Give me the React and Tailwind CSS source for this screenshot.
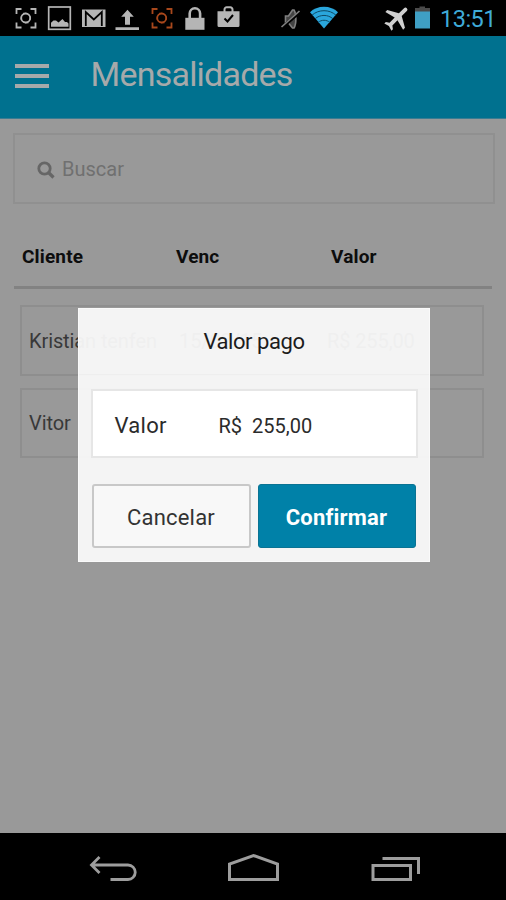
import { useState } from 'react';

const clients = [
  { name: 'Kristian tenfen', due: '15/02/15', value: 'R$ 255,00' },
  { name: 'Vitor', due: '', value: '' },
];

const StatusIcon = ({ children, className = 'text-[#b5b5b5]' }) => (
  <svg viewBox="0 0 34 36" className={`h-9 w-[34px] shrink-0 ${className}`} fill="none" stroke="currentColor" strokeWidth="2">
    {children}
  </svg>
);

const CaptureIcon = ({ className }) => (
  <StatusIcon className={className}>
    <path d="M7.500 14V9h5M21.500 9h5v5M26.500 22.500v5h-5M12.500 27.500h-5v-5" strokeWidth="1.800" />
    <circle cx="16.700" cy="18" r="4.500" strokeWidth="1.800" />
    <path d="M12.500 16l-.5 3.500M21 20l.5-3.500M14 13.300h3.500M16 22.800h3.500" strokeWidth="1" />
  </StatusIcon>
);

const StatusBar = () => (
  <div className="flex h-9 bg-black pl-[9px]">
    <CaptureIcon />
    <StatusIcon>
      <rect x="5.700" y="7" width="21.600" height="22.300" strokeWidth="1.700" />
      <path d="M8 26.700v-4l2.500-2.200h2.500l2.500 2 4-3.500 2.500 3h2l1.500 1.500v3.200z" fill="currentColor" stroke="none" />
    </StatusIcon>
    <StatusIcon>
      <path d="M5 9.500h23.500V27H5z" fill="currentColor" stroke="none" />
      <path d="M8.800 26V12l8 7.500 8-7.500v14" stroke="black" strokeWidth="1.800" />
    </StatusIcon>
    <StatusIcon>
      <path d="M16.500 9.800l6.300 7h-3.800v8h-5v-8h-3.800zM4.500 27.200H28V30H4.500z" fill="currentColor" stroke="none" />
    </StatusIcon>
    <CaptureIcon className="text-[#a8481c]" />
    <StatusIcon>
      <path d="M6.300 17.800h19.200v12H6.300z" fill="currentColor" stroke="none" />
      <path d="M10.700 18v-4.500a5.200 5.200 0 0 1 10.400 0V18" strokeWidth="2.600" />
    </StatusIcon>
    <StatusIcon>
      <path d="M4.500 11.300h22V25.500a1.500 1.500 0 0 1-1.500 1.500H6a1.500 1.500 0 0 1-1.500-1.500z" fill="currentColor" stroke="none" />
      <path d="M11.500 12V9.500a2.200 2.200 0 0 1 2.200-2.200h3.600a2.200 2.200 0 0 1 2.200 2.200V12" />
      <path d="M11.500 18.500l3 3 5.500-6.500" stroke="black" />
    </StatusIcon>
    <StatusIcon className="ml-[26px] text-[#808080]">
      <path d="M12.500 16h3l4-6h1.500c2.500 4 2.500 14 0 18h-1.500l-4-5h-3z" strokeWidth="1.600" fill="#444" />
      <path d="M9 27.500L27 12" stroke="black" strokeWidth="3" />
      <path d="M8.500 27L26.500 11" strokeWidth="1.600" />
    </StatusIcon>
    <StatusIcon className="text-[#2aa6dc]">
      <path d="M3 12.200C10 4.800 24 4.800 31 12.200L17 28.500z" fill="currentColor" stroke="none" />
      <path d="M5 15.200c6.500-6 17.500-6 24 0M8 18.800c5-4.500 13-4.500 18 0M11 22.500c3.500-3 8.500-3 12 0" stroke="#0d4a66" strokeWidth="1" />
    </StatusIcon>
    <StatusIcon className="ml-[38px] text-[#cfcfcf]">
      <path
        transform="translate(18.500 17.500) rotate(45) scale(1.320) translate(-12 -12)"
        d="M21.500 15.500v-2l-8-4.500V3.500a1.500 1.500 0 0 0-3 0V9l-8 4.500v2l8-2V19l-2.300 1.700v1.600L12 21.200l3.800 1.100v-1.600L13.500 19v-5.500z"
        fill="currentColor"
        stroke="none"
      />
    </StatusIcon>
    <svg viewBox="0 0 16 36" className="ml-px h-9 w-4 shrink-0">
      <path d="M5.500 6.500h5.500V8H16v5H1V8h4.500z" fill="#4a4a4a" />
      <path d="M1 11.500h15v17H1z" fill="#3f9fc4" />
    </svg>
    <span className="ml-[10px] mt-px text-[23.500px] leading-9 tracking-[-0.500px] text-[#3fabd8]">13:51</span>
  </div>
);

const Header = () => (
  <div className="flex h-[83px] items-center border-b border-[#3b7c92] bg-[#00718f] text-[#a6a9aa]">
    <button className="-mt-[3px] ml-[14.500px] flex w-[34px] flex-col gap-[6px]">
      <span className="h-1 w-full bg-current" />
      <span className="h-1 w-full bg-current" />
      <span className="h-1 w-full bg-current" />
    </button>
    <h1 className="-mt-[6px] ml-[42px] text-[34px] leading-10 tracking-[-0.780px]">Mensalidades</h1>
  </div>
);

const PaymentDialog = ({ value, onClose }) => (
  <div className="absolute left-[78px] top-[308px] h-[254px] w-[352px] border border-[#fafafa] bg-[#f9f9f9]/95">
    <h2 className="h-[66px] border-b border-[#eeeeee] text-center text-[22px] leading-[65px] tracking-[-0.450px] text-[#1c1c1c]">Valor pago</h2>
    <div className="mx-[11.500px] mt-[14px] flex h-[69px] items-center border-2 border-[#e6e6e6] bg-white pl-[22px] pt-[3px] text-[#2b2b2b]">
      <span className="w-[104px] text-[22px] tracking-[0.300px]">Valor</span>
      <span className="whitespace-pre pt-px text-[20px]">R$  {value}</span>
    </div>
    <div className="mx-[12.500px] mt-[26px] flex gap-[7px]">
      <button className="h-16 w-[159px] rounded-[3px] border-2 border-[#c8c8c8] bg-[#f8f8f8] pt-0.5 text-[22px] tracking-[0.200px] text-[#333]" onClick={onClose}>
        Cancelar
      </button>
      <button className="h-16 w-[158px] rounded-[3px] border border-[#0a7393] bg-[#0081a8] pt-0.5 text-[22px] font-bold tracking-[0.200px] text-white" onClick={onClose}>
        Confirmar
      </button>
    </div>
  </div>
);

const NavBar = () => (
  <div className="flex h-[67px] justify-center bg-black">
    <svg viewBox="0 0 506 67" className="h-[67px] w-[506px]" fill="none" stroke="#9d9d9d" strokeWidth="3">
      <path d="M110.500 46.500H128a7.200 7.200 0 0 0 0-14.500H92M99.500 24l-8 8 8 8" strokeWidth="2.800" />
      <path d="M229.500 46.500V31l24-8.500 24 8.500v15.500z" />
      <path d="M373 32.500h37.500v14H373zM382.500 25.500h36V41" />
    </svg>
  </div>
);

const App = () => {
  const [open, setOpen] = useState(true);

  return (
    <div className="relative flex h-[900px] w-[506px] flex-col overflow-hidden bg-[#999] font-['Roboto',sans-serif]">
      <StatusBar />
      <Header />

      <div className="flex-1 pt-[14px]">
        <div className="ml-[13px] flex h-[71px] w-[482px] items-center gap-[7px] border-2 border-[#909090] pl-[22px] text-[#707070]">
          <svg viewBox="0 0 18 18" className="mt-0.5 h-[18px] w-[18px]" fill="none" stroke="#666" strokeWidth="2.800">
            <circle cx="7.500" cy="7.500" r="5.700" />
            <path d="M11.500 11.500l5 5" strokeWidth="3.200" />
          </svg>
          <span className="text-[20px]">Buscar</span>
        </div>

        <div className="ml-[14px] mt-8 flex h-[53px] w-[478px] border-b-[3px] border-[#828282] pl-2 pt-[6px] text-[19px] font-bold leading-[30px] tracking-[0.150px] text-[#0d0d0d]">
          <span className="w-[154px]">Cliente</span>
          <span className="w-[155px]">Venc</span>
          <span>Valor</span>
        </div>

        <div className="ml-5 mt-4 flex w-[464px] flex-col gap-3">
          {clients.map((client) => (
            <div key={client.name} className="flex h-[70.500px] items-center border-2 border-[#8e8e8e] pl-[7px] pt-px text-[20px] tracking-[-0.100px] text-[#383838]">
              <span className="w-[150px]">{client.name}</span>
              <span className="w-[148px]">{client.due}</span>
              <span>{client.value}</span>
            </div>
          ))}
        </div>
      </div>

      <NavBar />
      {open && <PaymentDialog value="255,00" onClose={() => setOpen(false)} />}
    </div>
  );
};

export default App;
